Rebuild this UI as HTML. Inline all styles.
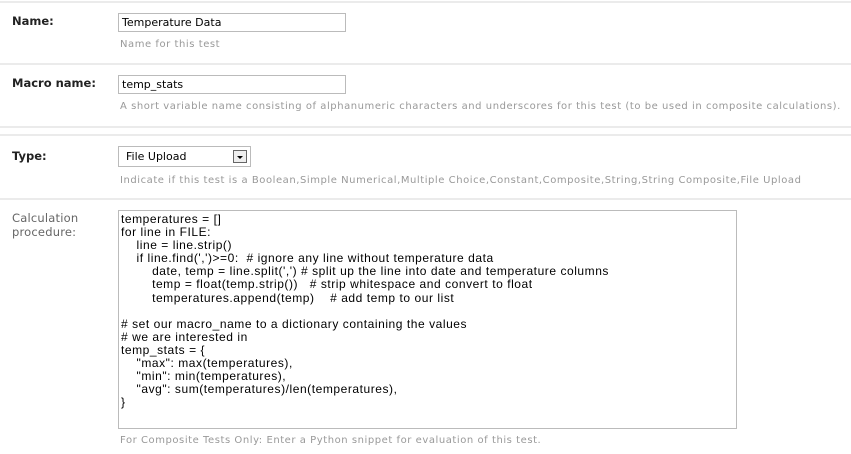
<!DOCTYPE html>
<html><head><meta charset="utf-8"><style>
body{margin:0;width:851px;height:454px;background:#fff;position:relative;overflow:hidden;font-family:"DejaVu Sans","Liberation Sans",sans-serif}
.a{position:absolute;white-space:nowrap}
.hr{position:absolute;left:0;width:851px;height:2px;background:#ebebeb}
.lb{font-size:11.5px;font-weight:bold;color:#222;left:12px}
.help{font-size:10px;color:#999;left:120px;letter-spacing:0.55px}
.inp{position:absolute;border:1px solid #bbb;background:#fff;box-sizing:border-box;font-family:"DejaVu Sans",sans-serif;font-size:11px;color:#000;padding:2px 3px;line-height:14px}
</style></head><body>
<div class="hr" style="top:1px"></div>
<div class="a lb" style="top:14px">Name:</div>
<div class="inp" style="left:118px;top:13px;width:228px;height:19px">Temperature Data</div>
<div class="a help" style="top:39px">Name for this test</div>
<div class="hr" style="top:63px"></div>
<div class="a lb" style="top:76px">Macro name:</div>
<div class="inp" style="left:118px;top:75px;width:228px;height:19px">temp_stats</div>
<div class="a help" style="top:101px">A short variable name consisting of alphanumeric characters and underscores for this test (to be used in composite calculations).</div>
<div class="hr" style="top:126px"></div>
<div class="hr" style="top:134px"></div>
<div class="a lb" style="top:149px">Type:</div>
<div class="inp" style="left:118px;top:146px;width:133px;height:21px;padding:3px 7px">File Upload
<div style="position:absolute;right:3px;top:3px;width:14px;height:13px;border:1px solid #666;box-sizing:border-box;background:#eee"><div style="position:absolute;left:3px;top:5px;border-left:3px solid transparent;border-right:3px solid transparent;border-top:3px solid #000"></div></div></div>
<div class="a help" style="top:175px">Indicate if this test is a Boolean,Simple Numerical,Multiple Choice,Constant,Composite,String,String Composite,File Upload</div>
<div class="hr" style="top:198px"></div>
<div class="a" style="left:12px;top:211px;font-size:11.5px;color:#666;line-height:14px;letter-spacing:0.2px">Calculation<br>procedure:</div>
<div class="inp" style="left:118px;top:210px;width:619px;height:219px;padding:2px 2px;font-family:'Liberation Sans',sans-serif;font-size:12px;letter-spacing:0.55px;line-height:13.1px;white-space:pre">temperatures = []
for line in FILE:
    line = line.strip()
    if line.find(',')&gt;=0:  # ignore any line without temperature data
        date, temp = line.split(',') # split up the line into date and temperature columns
        temp = float(temp.strip())   # strip whitespace and convert to float
        temperatures.append(temp)    # add temp to our list

# set our macro_name to a dictionary containing the values
# we are interested in
temp_stats = {
    "max": max(temperatures),
    "min": min(temperatures),
    "avg": sum(temperatures)/len(temperatures),
}</div>
<div class="a help" style="top:435px">For Composite Tests Only: Enter a Python snippet for evaluation of this test.</div>
</body></html>
